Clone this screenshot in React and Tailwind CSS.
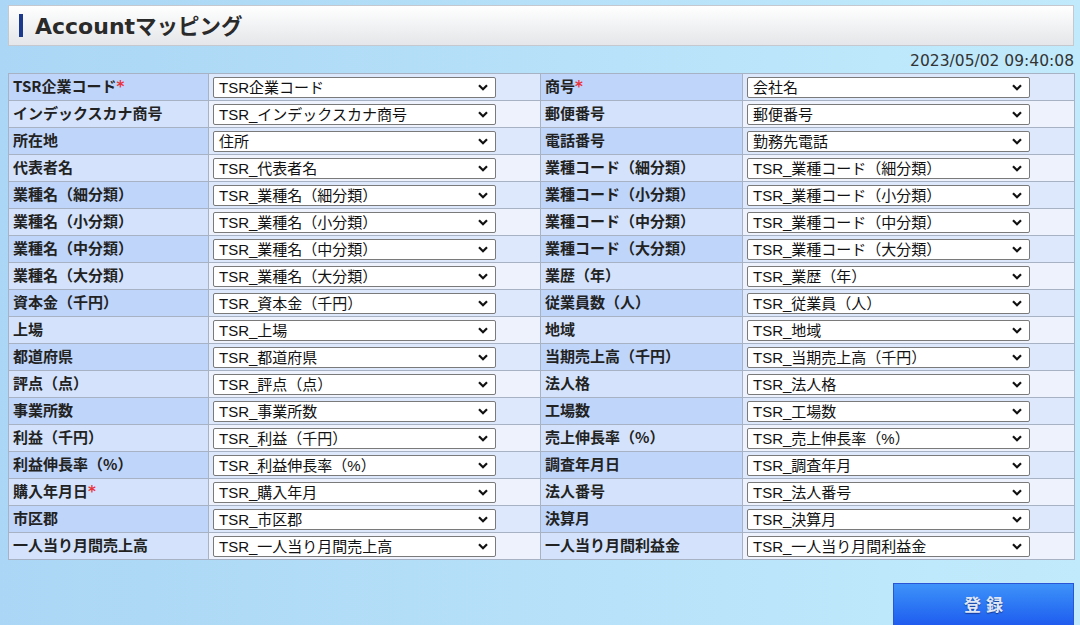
import React from "react";

const rows = [
  ["TSR企業コード", true, "TSR企業コード", "商号", true, "会社名"],
  ["インデックスカナ商号", false, "TSR_インデックスカナ商号", "郵便番号", false, "郵便番号"],
  ["所在地", false, "住所", "電話番号", false, "勤務先電話"],
  ["代表者名", false, "TSR_代表者名", "業種コード（細分類）", false, "TSR_業種コード（細分類）"],
  ["業種名（細分類）", false, "TSR_業種名（細分類）", "業種コード（小分類）", false, "TSR_業種コード（小分類）"],
  ["業種名（小分類）", false, "TSR_業種名（小分類）", "業種コード（中分類）", false, "TSR_業種コード（中分類）"],
  ["業種名（中分類）", false, "TSR_業種名（中分類）", "業種コード（大分類）", false, "TSR_業種コード（大分類）"],
  ["業種名（大分類）", false, "TSR_業種名（大分類）", "業歴（年）", false, "TSR_業歴（年）"],
  ["資本金（千円）", false, "TSR_資本金（千円）", "従業員数（人）", false, "TSR_従業員（人）"],
  ["上場", false, "TSR_上場", "地域", false, "TSR_地域"],
  ["都道府県", false, "TSR_都道府県", "当期売上高（千円）", false, "TSR_当期売上高（千円）"],
  ["評点（点）", false, "TSR_評点（点）", "法人格", false, "TSR_法人格"],
  ["事業所数", false, "TSR_事業所数", "工場数", false, "TSR_工場数"],
  ["利益（千円）", false, "TSR_利益（千円）", "売上伸長率（%）", false, "TSR_売上伸長率（%）"],
  ["利益伸長率（%）", false, "TSR_利益伸長率（%）", "調査年月日", false, "TSR_調査年月"],
  ["購入年月日", true, "TSR_購入年月", "法人番号", false, "TSR_法人番号"],
  ["市区郡", false, "TSR_市区郡", "決算月", false, "TSR_決算月"],
  ["一人当り月間売上高", false, "TSR_一人当り月間売上高", "一人当り月間利益金", false, "TSR_一人当り月間利益金"],
];

const Label = ({ text, required, odd }) => (
  <td
    className={`border border-[#a7b3c5] px-[4px] pb-[1px] h-[27px] align-middle text-[15px] leading-[20px] font-bold text-[#222] whitespace-nowrap ${
      odd ? "bg-[#bfd5f9]" : "bg-[#d4e3fb]"
    }`}
    style={{ fontFamily: '"DejaVu Sans", "Noto Sans CJK JP", sans-serif' }}
  >
    <span className="font-['Noto_Sans_CJK_JP']">{text}</span>
    {required && <span className="text-[#e8333a]">*</span>}
  </td>
);

const Picker = ({ value, odd }) => (
  <td
    className={`border border-[#a7b3c5] pl-[4px] h-[27px] align-middle ${
      odd ? "bg-[#dde8fc]" : "bg-[#edf2fd]"
    }`}
  >
    <div
      className="w-[283px] h-[21px] bg-white border border-[#7a7a7a] rounded-[2px] pl-[5px] pr-[7px] flex items-center justify-between text-[15px] leading-none text-[#111]"
      style={{ fontFamily: '"Liberation Sans", "Noto Sans CJK JP", sans-serif' }}
    >
      <span className="pt-[1px]">{value}</span>
      <svg className="w-[10px] h-[7px] shrink-0" viewBox="0 0 10 7" fill="none" stroke="#111" strokeWidth="2.2">
        <path d="M1 1.2l4 4 4-4" />
      </svg>
    </div>
  </td>
);

export default function App() {
  return (
    <div
      className="w-[1080px] h-[625px] overflow-hidden bg-gradient-to-r from-[#abd6f5] to-[#c1ebfc] pl-[8px] pr-[6px] pt-[5px] text-[#222]"
      style={{ fontFamily: '"Noto Sans CJK JP", sans-serif' }}
    >
      {/* Header */}
      <div className="h-[41px] border border-[#c5c9cf] bg-gradient-to-b from-white to-[#e4e6e9] flex items-center pl-[10px]">
        <div className="w-[4px] h-[23px] bg-[#1c3a8c] mr-[12px]" />
        <h1 className="font-bold text-[#2a2a2a] leading-none flex items-baseline">
          <span className="text-[22px]" style={{ fontFamily: '"DejaVu Sans", sans-serif' }}>
            Account
          </span>
          <span className="text-[21.5px]">マッピング</span>
        </h1>
      </div>

      {/* Timestamp */}
      <div
        className="h-[27px] flex items-center justify-end text-[15.5px] text-[#333] pt-[5px]"
        style={{ fontFamily: '"DejaVu Sans", sans-serif' }}
      >
        2023/05/02 09:40:08
      </div>

      {/* Mapping table */}
      <table className="border-collapse w-[1066px] table-fixed">
        <colgroup>
          <col className="w-[200px]" />
          <col className="w-[332px]" />
          <col className="w-[202px]" />
          <col className="w-[332px]" />
        </colgroup>
        <tbody>
          {rows.map((r, i) => {
            const odd = i % 2 === 0;
            return (
              <tr key={i}>
                <Label text={r[0]} required={r[1]} odd={odd} />
                <Picker value={r[2]} odd={odd} />
                <Label text={r[3]} required={r[4]} odd={odd} />
                <Picker value={r[5]} odd={odd} />
              </tr>
            );
          })}
        </tbody>
      </table>

      {/* Footer */}
      <div className="flex justify-end mt-[23px]">
        <button className="w-[181px] h-[46px] border border-[#2a55d6] bg-gradient-to-b from-[#3f92f9] to-[#1f57ee] text-[#dfe7f6] text-[17px] font-bold tracking-[5px] pl-[5px] pb-[4px] [text-shadow:0_1px_1px_rgba(0,0,60,0.5)]">
          登録
        </button>
      </div>
    </div>
  );
}
